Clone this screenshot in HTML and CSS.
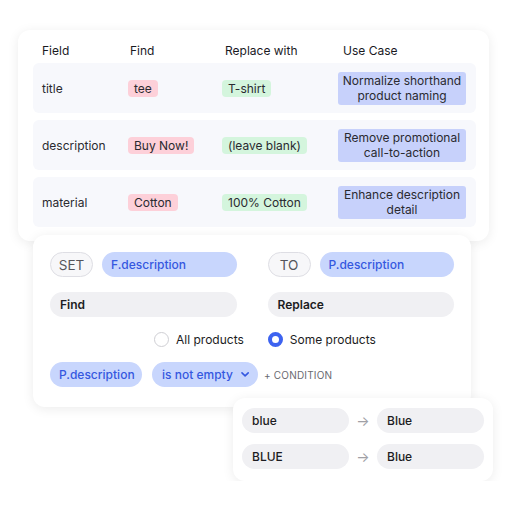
FILE: index.html
```html
<!DOCTYPE html>
<html>
<head>
    <title>Find and Replace</title>
    <link rel="stylesheet" href="styles.css">
</head>
<body>

<div class="stage">
    <div class="card table-card">
        <div class="grid head">
            <div>Field</div>
            <div>Find</div>
            <div>Replace with</div>
            <div>Use Case</div>
        </div>
        <div class="grid row">
            <div>title</div>
            <div><span class="tag tag-find">tee</span></div>
            <div><span class="tag tag-replace">T-shirt</span></div>
            <div class="use-case">Normalize shorthand product naming</div>
        </div>
        <div class="grid row">
            <div>description</div>
            <div><span class="tag tag-find">Buy Now!</span></div>
            <div><span class="tag tag-replace">(leave blank)</span></div>
            <div class="use-case">Remove promotional call-to-action</div>
        </div>
        <div class="grid row">
            <div>material</div>
            <div><span class="tag tag-find">Cotton</span></div>
            <div><span class="tag tag-replace">100% Cotton</span></div>
            <div class="use-case">Enhance description detail</div>
        </div>
    </div>

    <div class="card rule-card">
        <div class="cols">
            <div class="col">
                <div class="line">
                    <span class="keyword">SET</span>
                    <span class="pill pill-blue grow">F.description</span>
                </div>
                <div class="field">Find</div>
            </div>
            <div class="col">
                <div class="line">
                    <span class="keyword">TO</span>
                    <span class="pill pill-blue grow">P.description</span>
                </div>
                <div class="field">Replace</div>
            </div>
        </div>
        <div class="radios">
            <label class="radio"><span class="dot"></span>All products</label>
            <label class="radio"><span class="dot checked"></span>Some products</label>
        </div>
        <div class="conditions">
            <span class="pill pill-blue">P.description</span>
            <span class="pill pill-blue select">is not empty
                <svg width="10" height="7" viewBox="0 0 10 7"><path d="M1.2 1.5 L5 5.2 L8.8 1.5" fill="none" stroke="#3558e0" stroke-width="1.9" stroke-linecap="round" stroke-linejoin="round"/></svg>
            </span>
            <span class="add-condition">+ CONDITION</span>
        </div>
    </div>

    <div class="card map-card">
        <div class="map-row">
            <div class="field">blue</div>
            <span class="arrow">&rarr;</span>
            <div class="field">Blue</div>
        </div>
        <div class="map-row">
            <div class="field">BLUE</div>
            <span class="arrow">&rarr;</span>
            <div class="field">Blue</div>
        </div>
    </div>
</div>

</body>
</html>
```

FILE: styles.css
```css
body {
    margin: 0;
    background: #fff;
    font-family: Inter, 'Noto Sans', sans-serif;
    color: #1f1f24;
}

.stage {
    padding-top: 30px;
}

.card {
    background: #fff;
    border-radius: 12px;
    box-shadow: 0 2px 12px rgba(0, 0, 0, 0.08);
}

/* table card */
.table-card {
    margin-left: 18px;
    width: 471px;
    box-sizing: border-box;
    padding: 0 13px 14px 15px;
}

.grid {
    display: grid;
    grid-template-columns: 86px 94px 116px 128px;
    align-items: center;
    font-size: 12px;
    padding-left: 9px;
}

.head {
    padding-top: 13px;
    margin-bottom: 4px;
    line-height: 16px;
    color: #1a1a1f;
}

.head div:nth-child(2) { padding-left: 2px; }
.head div:nth-child(3) { padding-left: 3px; }
.head div:nth-child(4) { padding-left: 5px; }

.row {
    height: 50px;
    background: #f7f8fc;
    border-radius: 6px;
    margin-bottom: 7px;
    color: #2a2a30;
}

.row:last-child {
    margin-bottom: 0;
}

.tag {
    display: inline-block;
    line-height: 17px;
    padding: 0 6px;
    border-radius: 4px;
}

.tag-find {
    background: #fdd0d9;
}

.tag-replace {
    background: #d4f5dd;
}

.use-case {
    background: #c7d1fb;
    border-radius: 3px;
    text-align: center;
    line-height: 15px;
    padding: 2px 1px;
    height: 33px;
    box-sizing: border-box;
    display: flex;
    align-items: center;
    justify-content: center;
}

/* rule card */
.rule-card {
    position: relative;
    margin: -6px 0 0 33px;
    width: 438px;
    box-sizing: border-box;
    padding: 17px 17px 20px;
}

.cols {
    display: flex;
    gap: 31px;
}

.col {
    width: 187px;
    display: flex;
    flex-direction: column;
    gap: 15px;
}

.line {
    display: flex;
    gap: 9px;
}

.keyword {
    box-sizing: border-box;
    width: 43px;
    height: 25px;
    border: 1px solid #dedee4;
    background: #f7f7f9;
    border-radius: 13px;
    font-size: 13.5px;
    color: #55555c;
    display: flex;
    align-items: center;
    justify-content: center;
}

.pill {
    height: 25px;
    border-radius: 13px;
    display: inline-flex;
    align-items: center;
    padding: 0 9px;
    font-size: 12px;
    font-weight: 500;
    box-sizing: border-box;
    white-space: nowrap;
}

.pill-blue {
    background: #c8d6fd;
    color: #3558e0;
}

.grow {
    flex: 1;
}

.field {
    height: 25px;
    border-radius: 13px;
    background: #f0f0f3;
    display: flex;
    align-items: center;
    padding: 0 10px;
    font-size: 12px;
    font-weight: 600;
    color: #1c1c22;
}

.radios {
    display: flex;
    gap: 24px;
    margin: 15px 0 0 104px;
    height: 15px;
}

.radio {
    display: flex;
    align-items: center;
    gap: 7px;
    font-size: 12px;
    color: #1c1c22;
}

.dot {
    width: 15px;
    height: 15px;
    box-sizing: border-box;
    border-radius: 50%;
    border: 1.5px solid #cfcfd4;
    background: #fff;
}

.dot.checked {
    border: 4px solid #3d63f0;
}

.conditions {
    display: flex;
    align-items: center;
    gap: 10px;
    margin-top: 15px;
}

.conditions .pill:first-child {
    width: 92px;
}

.select {
    width: 106px;
    gap: 8px;
    padding-left: 10px;
}

.add-condition {
    font-size: 10px;
    color: #6a6a70;
    letter-spacing: 0.2px;
    margin-left: -4px;
}

/* mapping card */
.map-card {
    position: relative;
    margin: -9px 0 0 233px;
    width: 260px;
    box-sizing: border-box;
    padding: 10px 9px 12px;
    display: flex;
    flex-direction: column;
    gap: 11px;
}

.map-row {
    display: flex;
    align-items: center;
}

.map-row .field {
    width: 107px;
    box-sizing: border-box;
    font-weight: 500;
}

.arrow {
    width: 28px;
    text-align: center;
    color: #a0a0a6;
    font-size: 14px;
}
```
